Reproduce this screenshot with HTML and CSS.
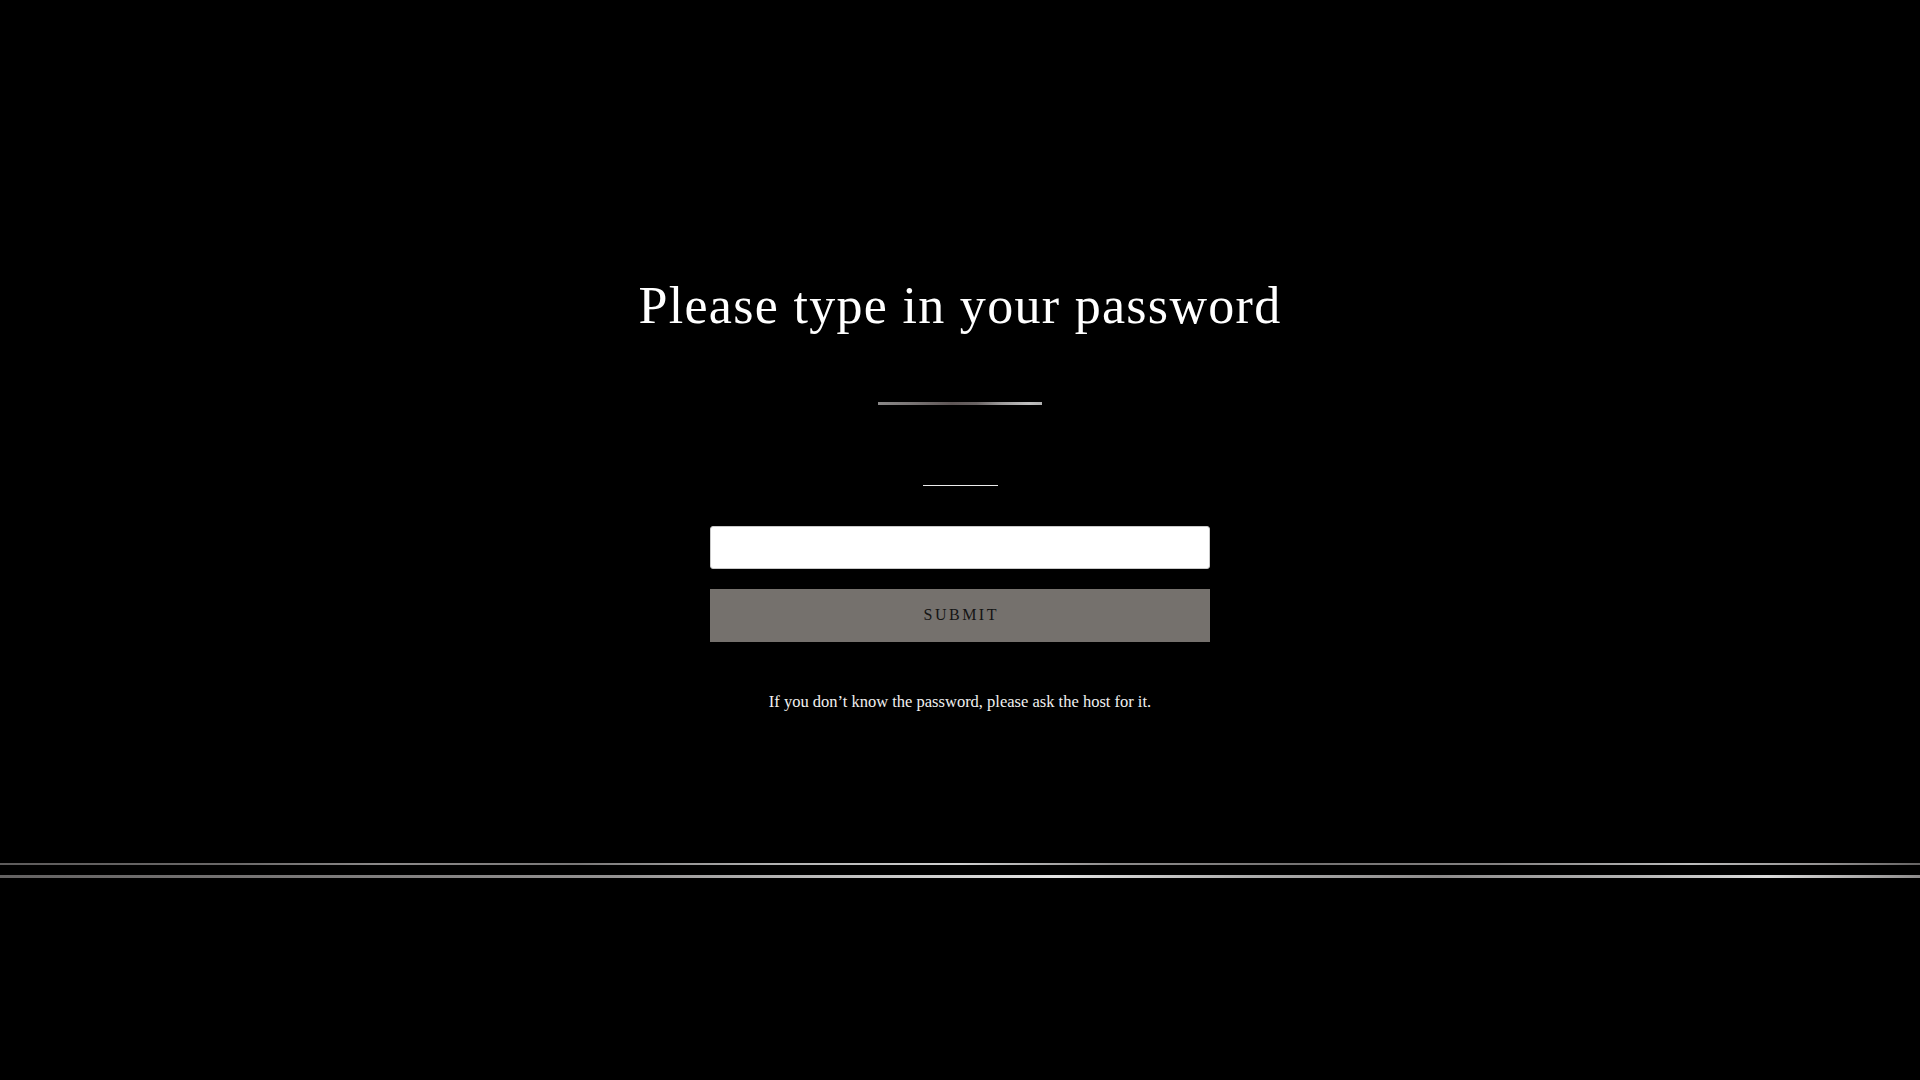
FILE: index.html
```html
<!DOCTYPE html>
<html lang="en">
<head>
<meta charset="utf-8">
<title>Password</title>
<link rel="stylesheet" href="styles.css">
</head>
<body>
<main class="page">
  <h1 class="title">Please type in your password</h1>
  <div class="rule-metal"></div>
  <div class="rule-thin"></div>
  <form class="pw-form" onsubmit="return false;">
    <input class="pw-input" type="password" aria-label="Password">
    <button class="pw-submit" type="submit">SUBMIT</button>
  </form>
  <p class="hint">If you don’t know the password, please ask the host for it.</p>
  <div class="footer-rules">
    <div class="band band-top"></div>
    <div class="band band-bottom"></div>
  </div>
</main>
</body>
</html>
```

FILE: styles.css
```css
html, body {
  margin: 0;
  padding: 0;
  background: #000;
}

body {
  width: 1920px;
  height: 1080px;
  overflow: hidden;
  font-family: "Liberation Serif", "Times New Roman", serif;
  color: #fff;
}

.page {
  display: flex;
  flex-direction: column;
  align-items: center;
  padding-top: 276px;
}

.title {
  margin: 0;
  font-family: "Liberation Serif", "Times New Roman", serif;
  font-weight: normal;
  font-size: 52px;
  line-height: 60px;
  height: 60px;
  letter-spacing: 1.3px;
  color: #fff;
  white-space: nowrap;
}

.rule-metal {
  margin-top: 66px;
  width: 164px;
  height: 3px;
  background: linear-gradient(90deg, #8a8888 0%, #7a7676 20%, #5e5656 45%, #6a6464 60%, #9c9a9a 75%, #c0c0c0 92%, #b0b0b0 100%);
}

.rule-thin {
  margin-top: 80px;
  width: 75px;
  height: 1px;
  background: #ececec;
}

.pw-form {
  margin-top: 40px;
  display: flex;
  flex-direction: column;
  gap: 20px;
  width: 500px;
}

.pw-input {
  box-sizing: border-box;
  width: 500px;
  height: 43px;
  margin: 0;
  padding: 0 12px;
  background: #fff;
  border: 1px solid #c9c9c9;
  border-radius: 3px;
  outline: none;
  font-family: "Liberation Serif", serif;
  font-size: 16px;
}

.pw-submit {
  box-sizing: border-box;
  width: 500px;
  height: 53px;
  margin: 0;
  padding: 0 0 2px;
  border: none;
  border-radius: 0;
  background: #75716d;
  color: #141414;
  font-family: "Liberation Serif", "Times New Roman", serif;
  font-size: 16px;
  letter-spacing: 2.5px;
  text-indent: 2.5px;
  cursor: pointer;
}

.hint {
  margin: 50px 0 0;
  font-size: 16.5px;
  line-height: 20px;
  color: #f0f0f0;
}

.footer-rules {
  margin-top: 151px;
  width: 100%;
  display: flex;
  flex-direction: column;
  gap: 10px;
}

.band {
  width: 100%;
  height: 2px;
}

.band-top {
  background: linear-gradient(90deg, #5e5c5c 0%, #6a6868 12%, #8c8a8a 20%, #7a7878 30%, #b0b0b0 40%, #d0d0d0 50%, #8e8c8c 58%, #74727 68%, #848282 78%, #bcbcbc 88%, #949292 95%, #666464 100%);
  background: linear-gradient(90deg, #5e5c5c 0%, #6a6868 12%, #8c8a8a 20%, #7a7878 30%, #b0b0b0 40%, #d0d0d0 50%, #8e8c8c 58%, #747272 68%, #848282 78%, #bcbcbc 88%, #949292 95%, #666464 100%);
}

.band-bottom {
  height: 3px;
  background: linear-gradient(90deg, #646262 0%, #747272 12%, #848282 22%, #949292 32%, #c4c4c4 45%, #e4e4e4 55%, #acacac 65%, #8e8c8c 75%, #b4b4b4 85%, #dcdcdc 92%, #8e8c8c 100%);
}
```
